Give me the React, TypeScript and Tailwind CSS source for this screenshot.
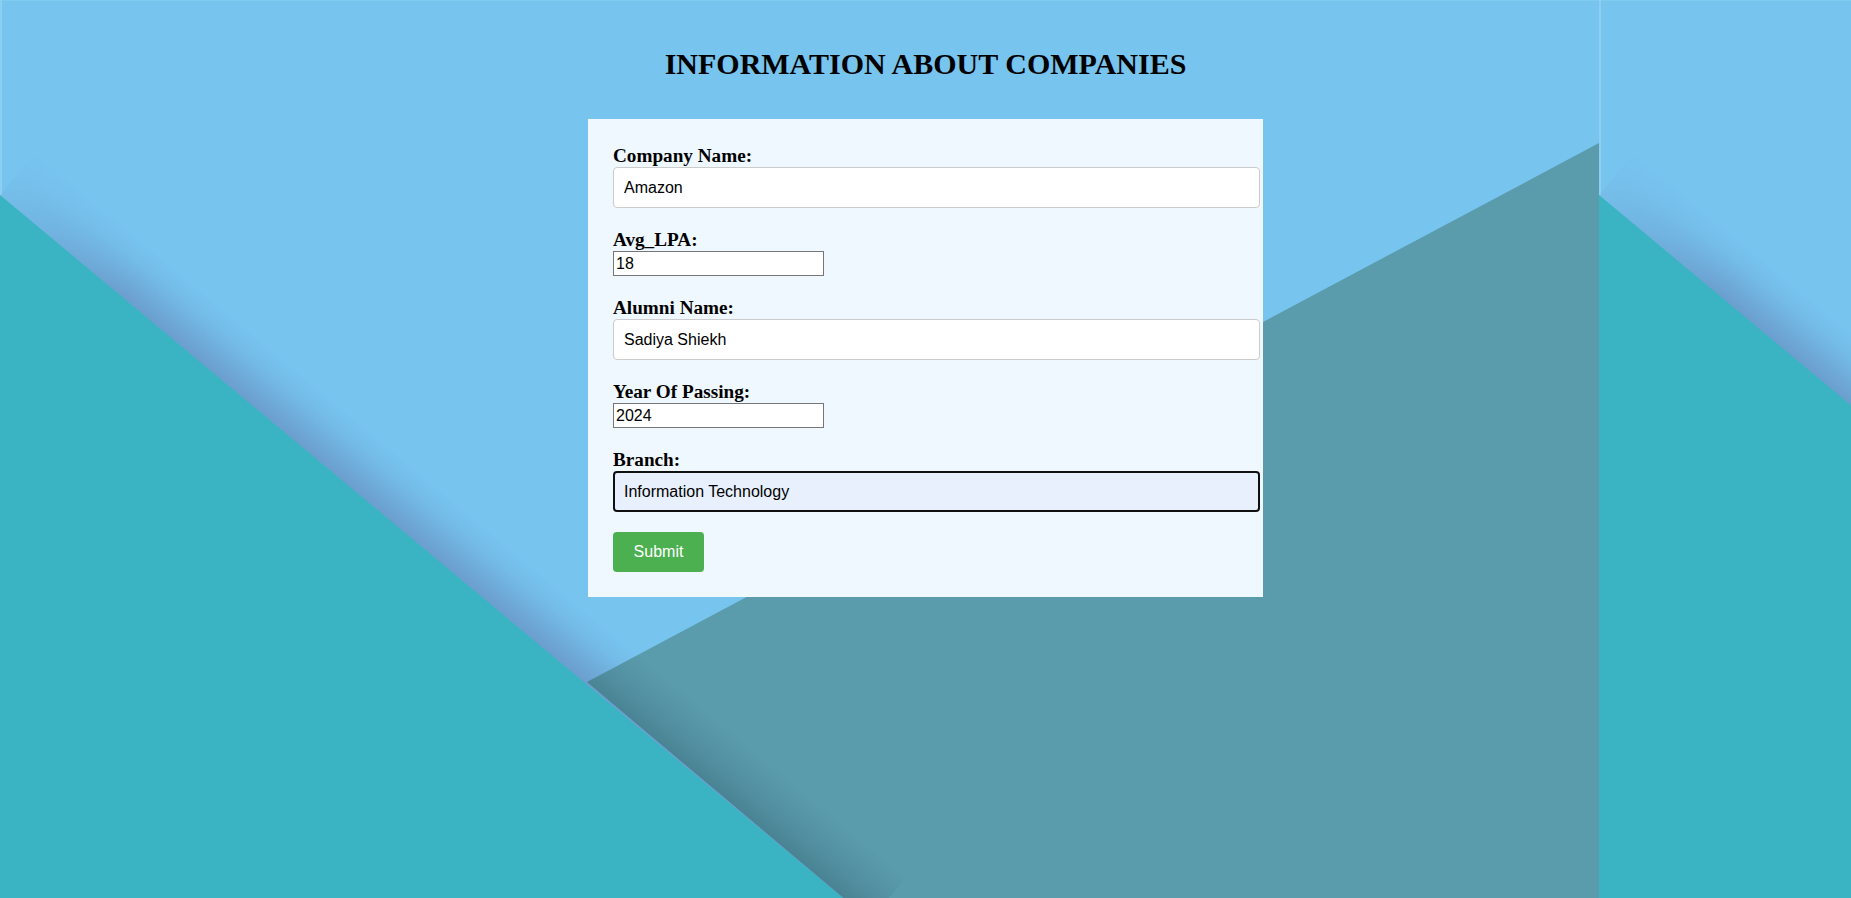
import React from "react";

function Tile({ id }: { id: string }) {
  return (
    <svg width="1599" height="898" viewBox="0 0 1599 898" className="block shrink-0">
      <defs>
        <linearGradient id={`ls-${id}`} gradientUnits="userSpaceOnUse" x1="0" y1="195" x2="35.2" y2="152.8">
          <stop offset="0" stopColor="rgb(80,70,130)" stopOpacity="0.3" />
          <stop offset="0.3" stopColor="rgb(80,70,130)" stopOpacity="0.2" />
          <stop offset="0.65" stopColor="rgb(80,70,130)" stopOpacity="0.07" />
          <stop offset="1" stopColor="rgb(80,70,130)" stopOpacity="0" />
        </linearGradient>
        <linearGradient id={`lf-${id}`} gradientUnits="userSpaceOnUse" x1="0" y1="195" x2="120" y2="295">
          <stop offset="0" stopColor="white" stopOpacity="0.15" />
          <stop offset="1" stopColor="white" stopOpacity="1" />
        </linearGradient>
        <mask id={`lm-${id}`}>
          <rect x="0" y="0" width="1599" height="898" fill={`url(#lf-${id})`} />
        </mask>
        <linearGradient id={`ds-${id}`} gradientUnits="userSpaceOnUse" x1="587" y1="682" x2="622.2" y2="639.8">
          <stop offset="0" stopColor="rgb(22,58,72)" stopOpacity="0.24" />
          <stop offset="0.5" stopColor="rgb(22,58,72)" stopOpacity="0.09" />
          <stop offset="1" stopColor="rgb(22,58,72)" stopOpacity="0" />
        </linearGradient>
        <clipPath id={`dc-${id}`}>
          <polygon points="587,682 1599,143 1599,898 843,898" />
        </clipPath>
      </defs>
      <rect x="0" y="0" width="1599" height="898" fill="#77c4ef" />
      <rect x="0" y="0" width="1599" height="1" fill="#80cbf0" />
      <rect x="0" y="0" width="2" height="195" fill="#8ccff2" />
      <polygon points="0,195 843,898 0,898" fill="#3ab3c3" />
      <polygon
        points="0,195 843,898 878.2,855.8 35.2,152.8"
        fill={`url(#ls-${id})`}
        mask={`url(#lm-${id})`}
      />
      <polygon points="587,682 1599,143 1599,898 843,898" fill="#5a9bac" />
      <g clipPath={`url(#dc-${id})`}>
        <polygon points="560,660 870,920 930,850 620,590" fill={`url(#ds-${id})`} />
      </g>
    </svg>
  );
}

function Background() {
  return (
    <div className="absolute inset-0 flex overflow-hidden">
      <Tile id="a" />
      <Tile id="b" />
    </div>
  );
}

const labelCls =
  "block h-[23px] leading-[23px] text-[19.2px] font-bold text-black font-['Liberation_Serif','Times_New_Roman',serif]";
const bigInput =
  "block w-[647px] h-[41px] px-[10px] border border-[#cccccc] rounded-[4px] bg-white text-[16px] text-black outline-none font-['Liberation_Sans',Arial,sans-serif]";
const smallInput =
  "block w-[211px] h-[25px] px-[2px] border border-[#767676] bg-white text-[16px] text-black outline-none font-['Liberation_Sans',Arial,sans-serif]";

export default function App() {
  return (
    <div className="relative h-screen min-h-[898px] w-full overflow-hidden">
      <Background />
      <div className="relative flex flex-col items-center pt-[47px]">
        <h1 className="mb-[39px] text-[30px] leading-[33px] font-bold text-black font-['Liberation_Serif','Times_New_Roman',serif]">
          INFORMATION ABOUT COMPANIES
        </h1>
        <form className="flex w-[675px] flex-col gap-[20px] bg-[#f0f8ff] p-[25px]" onSubmit={(e) => e.preventDefault()}>
          <div className="flex flex-col">
            <label className={labelCls}>Company Name:</label>
            <input type="text" defaultValue="Amazon" className={bigInput} />
          </div>
          <div className="flex flex-col">
            <label className={labelCls}>Avg_LPA:</label>
            <input type="text" defaultValue="18" className={smallInput} />
          </div>
          <div className="flex flex-col">
            <label className={labelCls}>Alumni Name:</label>
            <input type="text" defaultValue="Sadiya Shiekh" className={bigInput} />
          </div>
          <div className="flex flex-col">
            <label className={labelCls}>Year Of Passing:</label>
            <input type="text" defaultValue="2024" className={smallInput} />
          </div>
          <div className="flex flex-col">
            <label className={labelCls}>Branch:</label>
            <input
              type="text"
              defaultValue="Information Technology"
              className="block w-[647px] h-[41px] px-[9px] border-2 border-[#101010] rounded-[4px] bg-[#e8f0fe] text-[16px] text-black outline-none font-['Liberation_Sans',Arial,sans-serif]"
            />
          </div>
          <button
            type="submit"
            className="self-start w-[91px] h-[40px] rounded-[4px] bg-[#4caf50] text-[16px] text-white font-['Liberation_Sans',Arial,sans-serif]"
          >
            Submit
          </button>
        </form>
      </div>
    </div>
  );
}
